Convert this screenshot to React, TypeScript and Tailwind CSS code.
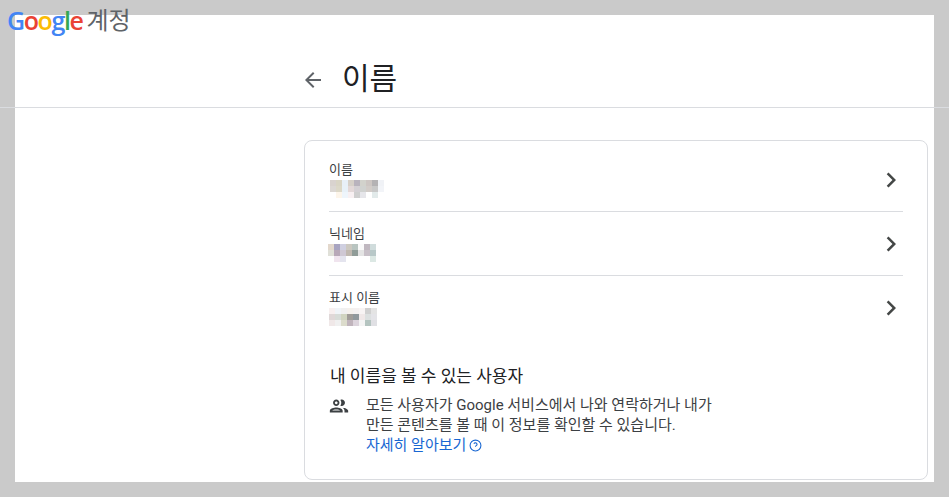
const KR = "font-['Roboto','Noto_Sans_CJK_KR',sans-serif]";

type Field = { label: string; offset: string; cells: string[][] };

const FIELDS: Field[] = [
    {
        label: "이름",
        offset: "ml-[1px]",
        cells: [
            ["#d9d3cf", "#d9d5c5", "#e8f0f8", "#d6d0c8", "#b9b3bd", "#d2d2cc", "#cdc6c3", "#b4b2b4", "#f0f2f6"],
            ["#dcd8d4", "#dcd8c8", "#e8f1f8", "#e3d8d8", "#d4d0d4", "#d0d2d0", "#d2ccc8", "#c8c8c8", "#f2f4f8"],
            ["#ffffff", "#fdf5ea", "#eef5fb", "#f8f0f2", "#cfcfcf", "#e6e6ea", "#ffffff", "#e2eaea", "#ffffff"],
        ],
    },
    {
        label: "닉네임",
        offset: "-ml-[1px]",
        cells: [
            ["#e3d8cc", "#a8a4c0", "#cfcfe0", "#ccc8c0", "#b8c4c0", "#fafafa", "#c0b8c0", "#d0dcdc"],
            ["#e0e0d8", "#b8a8b8", "#cfc8d4", "#c0b8b0", "#909c98", "#e4e4e4", "#c8c0c8", "#b8c8c8"],
            ["#ffffff", "#f0e4ee", "#e4e4ee", "#ffffff", "#ffffff", "#ffffff", "#ffffff", "#dce8e4"],
        ],
    },
    {
        label: "표시 이름",
        offset: "ml-0",
        cells: [
            ["#f8f0f0", "#f0f4f8", "#f0f0f0", "#f4f0ec", "#f4f0f0", "#f8f4f4", "#d0d0d0", "#e4e4e4"],
            ["#e0d8d8", "#d8dcd8", "#d0d4c0", "#a09c98", "#90989c", "#f0e8e8", "#dce0e0", "#e4e4e8"],
            ["#f0e8e8", "#f0f0f0", "#dcdccc", "#c0b4bc", "#dcd4dc", "#f4f4f4", "#b4c4c0", "#e0e0e4"],
        ],
    },
];

function Mosaic({ cells, offset }: { cells: string[][]; offset: string }) {
    return (
        <div className={`flex flex-col ${offset}`}>
            {cells.map((row, i) => (
                <div key={i} className="flex">
                    {row.map((c, j) => (
                        <div key={j} className="h-[6px] w-[6px]" style={{ backgroundColor: c }} />
                    ))}
                </div>
            ))}
        </div>
    );
}

function FieldRow({ field, last }: { field: Field; last: boolean }) {
    return (
        <div className={`flex h-[64px] items-center ${last ? "" : "border-b border-[#dadce0]"}`}>
            <div className="flex-1">
                <div className="text-[13px] leading-[16px] text-[#3c4043]">{field.label}</div>
                <div className="mt-[2px]">
                    <Mosaic cells={field.cells} offset={field.offset} />
                </div>
            </div>
            <svg width="30" height="30" viewBox="0 0 24 24" className="-mr-[3px] fill-[#444746]">
                <path d="M10 6L8.59 7.41 13.17 12l-4.58 4.59L10 18l6-6z" />
            </svg>
        </div>
    );
}

export default function App() {
    return (
        <div className={`relative h-[497px] w-[949px] overflow-hidden bg-[#cacaca] p-[15px] ${KR}`}>
            <div className="flex h-[467px] flex-col bg-white pl-[289px] pr-[6px]">
                <div className="flex h-[125px] shrink-0 items-start pt-[42px]">
                    <svg width="24" height="24" viewBox="0 0 24 24" className="-ml-[3px] mt-[11px] fill-[#5f6368]">
                        <path d="M20 11H7.83l5.59-5.59L12 4l-8 8 8 8 1.41-1.41L7.83 13H20v-2z" />
                    </svg>
                    <h1 className="ml-[17px] mt-[2px] text-[30px] leading-[40px] font-normal text-[#202124]">이름</h1>
                </div>

                <div className="h-[340px] rounded-[8px] border border-[#dadce0] px-[24px] pt-[7px]">
                    {FIELDS.map((f, i) => (
                        <FieldRow key={f.label} field={f} last={i === FIELDS.length - 1} />
                    ))}
                    <h2 className="ml-[1px] mt-[24px] text-[17px] leading-[24px] font-normal text-[#202124]">
                        내 이름을 볼 수 있는 사용자
                    </h2>
                    <div className="mt-[8px] flex">
                        <svg width="22" height="22" viewBox="0 0 24 24" className="-ml-[1px] -mt-[1px] shrink-0 fill-[#3c4043]">
                            <path d="M9 13.75c-2.34 0-7 1.17-7 3.5V19h14v-1.75c0-2.33-4.66-3.5-7-3.5zM4.34 17c.84-.58 2.87-1.25 4.66-1.25s3.82.67 4.66 1.25H4.34zM9 12c1.93 0 3.5-1.57 3.5-3.5S10.93 5 9 5 5.5 6.57 5.5 8.5 7.07 12 9 12zm0-5c.83 0 1.5.67 1.5 1.5S9.83 10 9 10s-1.5-.67-1.5-1.5S8.17 7 9 7zm7.04 6.81c1.16.84 1.96 1.96 1.96 3.44V19h4v-1.75c0-2.02-3.5-3.17-5.96-3.44zM15 12c1.93 0 3.5-1.57 3.5-3.5S16.93 5 15 5c-.54 0-1.04.13-1.5.35.63.89 1 1.98 1 3.15s-.37 2.26-1 3.15c.46.22.96.35 1.5.35z" />
                        </svg>
                        <div className="ml-[16px] text-[15px] leading-[19.5px] text-[#3c4043]">
                            <p>모든 사용자가 Google 서비스에서 나와 연락하거나 내가</p>
                            <p>만든 콘텐츠를 볼 때 이 정보를 확인할 수 있습니다.</p>
                            <a className="mt-[1px] flex items-center text-[#1967d2]">
                                자세히 알아보기
                                <svg width="13" height="13" viewBox="0 0 24 24" fill="none" stroke="#1967d2" strokeWidth="2" className="ml-[3px]">
                                    <circle cx="12" cy="12" r="10" />
                                    <path d="M9.1 9a3 3 0 0 1 5.8 1c0 2-3 2.6-3 4.2" />
                                    <path d="M12 17.5h.01" />
                                </svg>
                            </a>
                        </div>
                    </div>
                </div>
            </div>

            {/* these two sit over the grey frame */}
            <div className="absolute left-0 right-0 top-[107px] h-px bg-[#dadce0]" />
            <div className="absolute left-[7px] top-[3px] flex items-baseline">
                <span className="font-['Open_Sans',sans-serif] text-[25px] leading-[34px] font-semibold tracking-[-1.4px]">
                    <span className="text-[#4285f4]">G</span>
                    <span className="text-[#ea4335]">o</span>
                    <span className="text-[#fbbc05]">o</span>
                    <span className="text-[#4285f4]">g</span>
                    <span className="text-[#34a853]">l</span>
                    <span className="text-[#ea4335]">e</span>
                </span>
                <span className="relative -top-[1px] ml-[4px] text-[24px] leading-[30px] text-[#5f6368]">계정</span>
            </div>
        </div>
    );
}
